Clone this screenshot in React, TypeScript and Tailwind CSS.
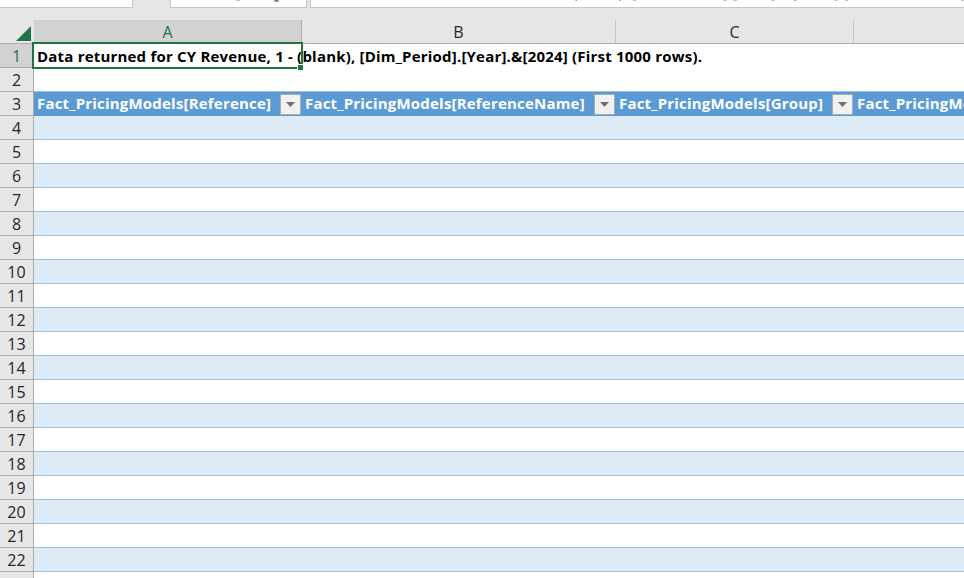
const rows = Array.from({ length: 23 }, (_, i) => i + 1);

function FilterButton() {
  return (
    <span className="flex h-[21px] w-[21px] shrink-0 items-center justify-center border border-[#ababab] bg-[#f1f1f1]">
      <svg width="9" height="5" viewBox="0 0 9 5">
        <polygon points="0,0 9,0 4.5,5" fill="#6f6f6f" />
      </svg>
    </span>
  );
}

function HeadCell({ label, width }: { label: string; width: string }) {
  return (
    <div className={`flex ${width} shrink-0 items-center justify-between overflow-hidden pl-[3px] pr-[1px]`}>
      <span className="-mt-[2px] whitespace-nowrap text-[15px] font-bold tracking-[0.2px] text-white">{label}</span>
      <FilterButton />
    </div>
  );
}

function RowContent({ n }: { n: number }) {
  if (n === 1) {
    return (
      <div className="flex h-full flex-1 items-center overflow-hidden pl-[3px]">
        <span className="whitespace-nowrap text-[15px] font-bold tracking-[0.2px] text-black">
          Data returned for CY Revenue, 1 - (blank), [Dim_Period].[Year].&amp;[2024] (First 1000 rows).
        </span>
      </div>
    );
  }
  if (n === 2) return <div className="h-full flex-1 border-b border-[#9bc2e6] bg-white" />;
  if (n === 3) {
    return (
      <div className="flex h-full flex-1 items-center overflow-hidden bg-[#5b9bd5]">
        <HeadCell label="Fact_PricingModels[Reference]" width="w-[268px]" />
        <HeadCell label="Fact_PricingModels[ReferenceName]" width="w-[314px]" />
        <HeadCell label="Fact_PricingModels[Group]" width="w-[238px]" />
        <div className="-mt-[2px] flex-1 whitespace-nowrap pl-[3px] text-[15px] font-bold tracking-[0.2px] text-white">
          Fact_PricingModels[Measure]
        </div>
      </div>
    );
  }
  return (
    <div
      className={`h-full flex-1 border-b border-[#9bc2e6] ${n % 2 === 0 ? "bg-[#ddebf7]" : "bg-white"}`}
    />
  );
}

export default function App() {
  return (
    <div className="flex h-[578px] w-[964px] flex-col overflow-hidden bg-white [font-family:'Open_Sans',sans-serif]">
      {/* Ribbon remains: name box, function box, formula bar */}
      <div className="flex h-[20px] shrink-0 items-start bg-[#e6e6e6]">
        <div className="h-[8px] w-[133px] border-b border-r border-[#c6c6c6] bg-white" />
        <div className="ml-[37px] flex h-[8px] w-[137px] items-start gap-[34px] border-x border-b border-[#c6c6c6] bg-white pl-[65px]">
          <span className="h-[1px] w-[4px] bg-[#c4c4c4]" />
          <span className="h-[2px] w-[5px] rounded-b-full bg-[#808080]" />
        </div>
        <div className="ml-[3px] h-[8px] flex-1 overflow-hidden border-b border-l border-[#c6c6c6] bg-white pl-[8px]">
          <div className="-mt-[18px] whitespace-nowrap text-[16px] leading-[20px] text-black">
            Data returned for CY Revenue, 1 - (blank), [Dim_Period].[Year].&amp;[2024] (First 1000 rows).
          </div>
        </div>
      </div>

      {/* Column headers */}
      <div className="flex h-[24px] shrink-0 border-b border-[#ababab] bg-[#e6e6e6] text-[16px]">
        <div className="flex w-[34px] shrink-0 items-end justify-end pb-[2px] pr-[3px]">
          <svg width="15" height="15" viewBox="0 0 15 15">
            <polygon points="0,15 15,15 15,0" fill="#217346" />
          </svg>
        </div>
        <div className="flex w-[268px] shrink-0 items-center justify-center border-r border-[#ababab] bg-[#d2d2d2] text-[#217346]">
          A
        </div>
        <div className="flex w-[314px] shrink-0 items-center justify-center border-r border-[#c6c6c6] text-[#262626]">
          B
        </div>
        <div className="flex w-[238px] shrink-0 items-center justify-center border-r border-[#c6c6c6] text-[#262626]">
          C
        </div>
        <div className="flex-1" />
      </div>

      {/* Sheet */}
      <div className="relative flex-1">
        {rows.map((n) => (
          <div key={n} className="flex h-[24px]">
            <div
              className={`flex w-[34px] shrink-0 items-center justify-center border-b border-r border-[#ababab] text-[16px] ${
                n === 1 ? "bg-[#d2d2d2] text-[#217346]" : "bg-[#e6e6e6] text-[#262626]"
              }`}
            >
              {n === 23 ? "" : n}
            </div>
            <RowContent n={n} />
          </div>
        ))}
        {/* Active cell selection */}
        <div className="absolute left-[32px] top-[-2px] h-[27px] w-[271px] border-2 border-[#217346]">
          <span className="absolute bottom-[-3px] right-[-2px] h-[6px] w-[6px] border-l border-t border-white bg-[#217346]" />
        </div>
      </div>
    </div>
  );
}
